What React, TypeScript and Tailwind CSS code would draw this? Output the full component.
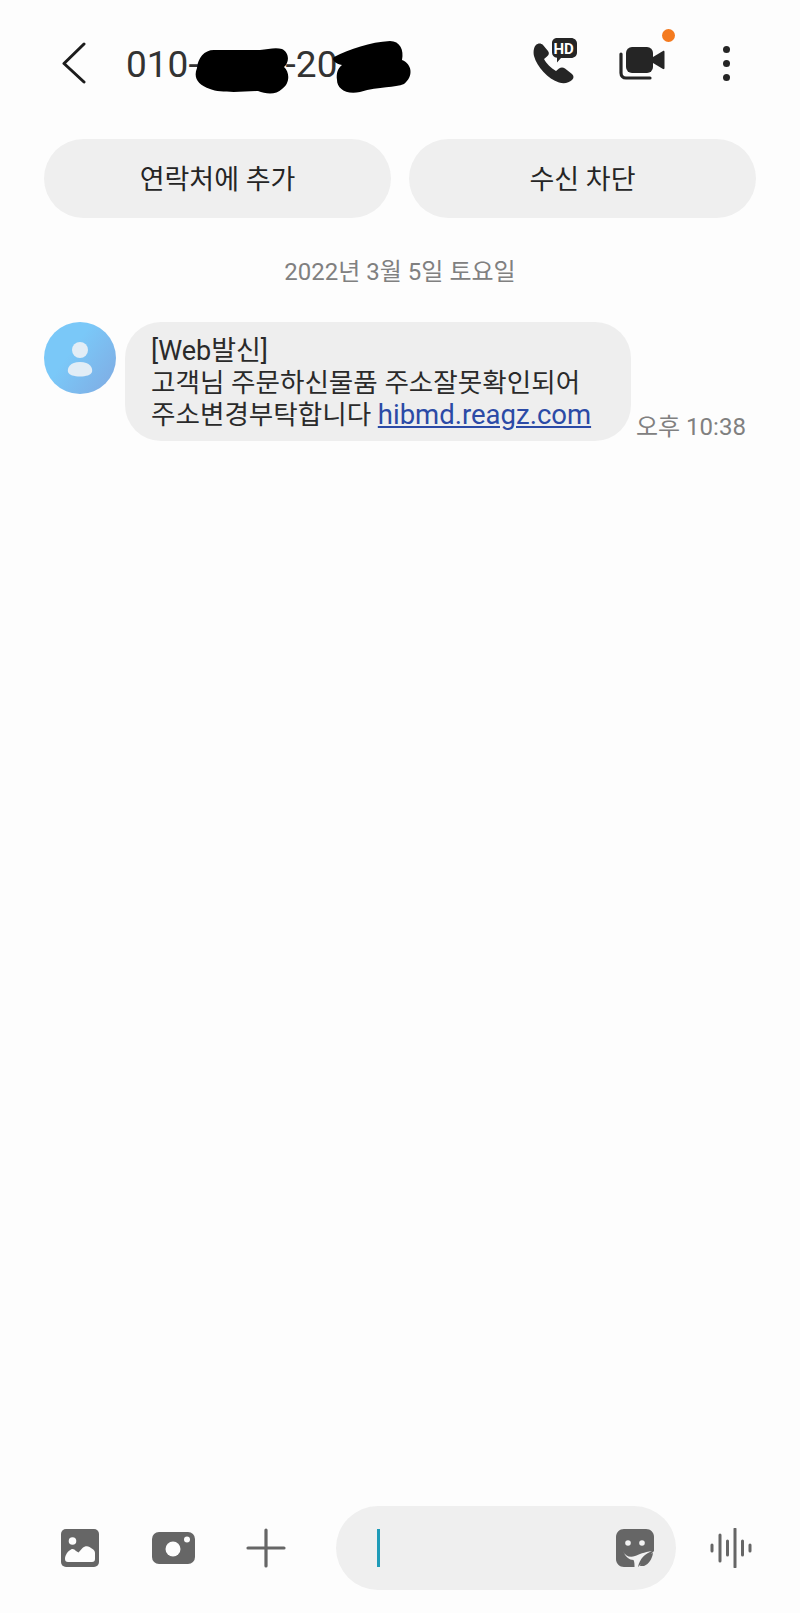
import React from "react";

const FONT = "font-['Roboto','Noto_Sans_CJK_KR',sans-serif]";

const HeaderIcons: React.FC = () => (
  <div className="flex items-center">
    {/* HD call */}
    <svg width="46" height="46" viewBox="0 0 46 46" className="mr-[41px] overflow-visible">
      <path
        d="M5 5C7 3 10 3 12 5L17 11C18.500 13 18 15 16 16.500L13 19C15 23 20 28 25 31L28 28.500C30 27 32 27 34 28.500L41 34C43 36 43 38 41 40C38 43 33 44 28 42.500C17 39 6 27 3 16C2 11 3 7 5 5z"
        fill="#252525"
      />
      <path d="M26 -2h14c3.500 0 6 2.400 6 5.500v9c0 3.200-2.500 5.500-6 5.500H30l-4 4.500v-4.700c-3.200-.4-5-2.500-5-5.300V3c0-2.800 2-5 5-5z" fill="#252525" />
      <text x="22.500" y="13.500" fontSize="15" fontWeight="700" fill="#ffffff" fontFamily="Roboto, sans-serif">HD</text>
    </svg>
    {/* Video call */}
    <div className="relative mr-[57px]">
      <svg width="48" height="36" viewBox="0 0 48 36" className="block">
        <path d="M3 9v19c0 3 2 5 5 5h24" fill="none" stroke="#252525" strokeWidth="3.200" strokeLinecap="round" />
        <rect x="8" y="2" width="27" height="26" rx="6" fill="#252525" />
        <path d="M35 12l10-6c.8-.4 1.500 0 1.500 1v16c0 1-.7 1.400-1.500 1l-10-6z" fill="#252525" />
      </svg>
      <span className="absolute -top-[16px] right-[-9px] h-[13px] w-[13px] rounded-full bg-[#f47a1f]"></span>
    </div>
    {/* More */}
    <div className="flex flex-col gap-[7px]">
      <span className="h-[7px] w-[7px] rounded-full bg-[#252525]"></span>
      <span className="h-[7px] w-[7px] rounded-full bg-[#252525]"></span>
      <span className="h-[7px] w-[7px] rounded-full bg-[#252525]"></span>
    </div>
  </div>
);

const App: React.FC = () => {
  return (
    <div className={`${FONT} flex h-[1613px] w-[800px] flex-col bg-[#fdfdfd] text-[#252525]`}>
      {/* Header */}
      <div className="relative flex h-[126px] items-center pl-[61px] pr-[70px]">
        <svg width="26" height="42" viewBox="0 0 26 42" className="mr-[39px]">
          <path d="M23 2L3 21.500 23 40" fill="none" stroke="#1c1c1c" strokeWidth="3" strokeLinecap="round" strokeLinejoin="round" />
        </svg>
        <span className="pt-[2px] text-[37px] leading-none text-[#333333]">010-</span>
        <span className="w-[87px]"></span>
        <span className="pt-[2px] text-[37px] leading-none text-[#333333]">-20</span>
        <div className="flex-1"></div>
        <HeaderIcons />
        {/* Redacted digits */}
        <svg width="230" height="60" viewBox="0 0 230 60" className="absolute left-[190px] top-[38px]">
          <path d="M7 30C8 20 14 12 24 12L70 12C78 11 86 9 92 11C99 14 100 24 94 29C100 34 100 46 92 51C86 57 76 56 68 53C50 54 30 55 20 51C8 47 3 40 7 30z" fill="#000000" />
          <path d="M144 19C160 11 180 4 200 3C210 3 214 12 212 22C222 26 224 38 214 46C205 50 190 48 170 54C155 57 147 50 147 42C146 35 148 30 152 27C146 26 141 22 144 19z" fill="#000000" />
        </svg>
      </div>

      {/* Actions */}
      <div className="mt-[13px] flex gap-[18px] pl-[44px] pr-[44px]">
        <button className="h-[79px] w-[347px] rounded-full bg-[#efefef] pt-[3px] text-[27px] text-[#252525]">연락처에 추가</button>
        <button className="h-[79px] w-[347px] rounded-full bg-[#efefef] pt-[3px] text-[27px] text-[#252525]">수신 차단</button>
      </div>

      {/* Date */}
      <div className="mt-[37px] text-center text-[24px] leading-[35px] text-[#808080]">2022년 3월 5일 토요일</div>

      {/* Message */}
      <div className="mt-[32px] flex items-end pl-[44px]">
        <div className="mr-[9px] self-start">
          <svg width="72" height="72" viewBox="0 0 72 72" className="block">
            <defs>
              <linearGradient id="avatarBg" x1="0.45" y1="0.3" x2="1" y2="0.7">
                <stop offset="0" stopColor="#7ac8f8" />
                <stop offset="1" stopColor="#7fb0e6" />
              </linearGradient>
            </defs>
            <circle cx="36" cy="36" r="36" fill="url(#avatarBg)" />
            <circle cx="36" cy="28" r="8" fill="#e2edf6" />
            <path d="M36 40c10 0 13 6 12 10-1 3-6 4.500-12 4.500S25 53 24 50c-1-4 2-10 12-10z" fill="#e2edf6" />
          </svg>
        </div>
        <div className="h-[119px] w-[506px] rounded-[36px] bg-[#eeeeee] pl-[26px] pt-[13px] text-[26.6px] leading-[32px] text-[#2a2a2a]">
          <div className="text-[27px]">[Web발신]</div>
          <div>고객님 주문하신물품 주소잘못확인되어</div>
          <div>
            주소변경부탁합니다 <span className="text-[27.5px] text-[#2b4aa6] underline">hibmd.reagz.com</span>
          </div>
        </div>
        <span className="ml-[5px] text-[24px] leading-[28px] text-[#808080]">오후 10:38</span>
      </div>

      <div className="flex-1"></div>

      {/* Composer */}
      <div className="mb-[23px] flex items-center pl-[61px]">
        <svg width="38" height="38" viewBox="0 0 38 38" className="mr-[53px]">
          <rect width="38" height="38" rx="5" fill="#666666" />
          <circle cx="11.500" cy="12" r="3.800" fill="#fdfdfd" />
          <path d="M4 30c0-4 3-8 6-9.500 2-1 3.500 0 5 1.500l2.500 1.500 4-4.500c2-2 5-2.500 7-1l3 2c1.500 1 2.500 2 2.500 4v6c0 2-1 3-3 3H7c-2 0-3-1-3-3z" fill="#fdfdfd" />
        </svg>
        <svg width="43" height="32" viewBox="0 0 43 32" className="mr-[51px]">
          <rect width="43" height="32" rx="7" fill="#666666" />
          <circle cx="21" cy="17" r="7.500" fill="#fdfdfd" />
          <circle cx="35" cy="7.500" r="3" fill="#fdfdfd" />
        </svg>
        <svg width="40" height="40" viewBox="0 0 40 40" className="mr-[50px]">
          <path d="M20 2v36M2 20h36" fill="none" stroke="#666666" strokeWidth="3.200" strokeLinecap="round" />
        </svg>
        <div className="flex h-[84px] w-[340px] items-center rounded-full bg-[#efefef] pl-[41px] pr-[22px]">
          <span className="h-[38px] w-[3px] bg-[#1f9bb8]"></span>
          <div className="flex-1"></div>
          <svg width="38" height="38" viewBox="0 0 38 38">
            <path d="M8 0h22c4.500 0 8 3.500 8 8v14L22 38H8c-4.500 0-8-3.500-8-8V8c0-4.500 3.500-8 8-8z" fill="#666666" />
            <circle cx="12" cy="14" r="2.800" fill="#f2f2f2" />
            <circle cx="26" cy="14" r="2.800" fill="#f2f2f2" />
            <path d="M7 22c2 5 7 7 12 5 4-1.500 9-4 17-5-7 3-12 7-14 16l-3.500 0c0-3 0-5-1-7-4 0-8-3-10.500-9z" fill="#f2f2f2" />
            <path d="M24 37c1-6 5-11 13-13-1 6-4 11-9 13z" fill="#666666" />
          </svg>
        </div>
        <svg width="44" height="40" viewBox="0 0 44 40" className="ml-[33px]">
          <path d="M3 17v6M11 7v26M18.500 13v14M26 1v38M33.500 13v14M41 17v6" fill="none" stroke="#666666" strokeWidth="3" strokeLinecap="round" />
        </svg>
      </div>
    </div>
  );
};

export default App;
